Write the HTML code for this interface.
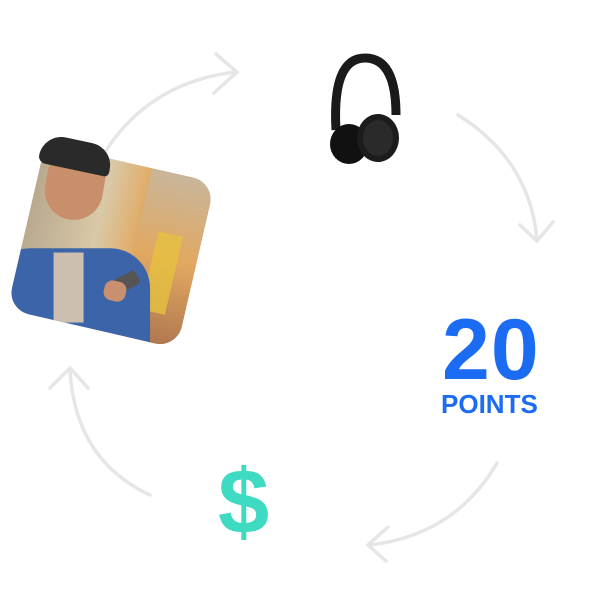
<!DOCTYPE html>
<html><head><meta charset="utf-8"><style>
html,body{margin:0;padding:0;background:#fff;width:600px;height:609px;overflow:hidden;position:relative;font-family:"Liberation Sans",sans-serif}
.card{position:absolute;left:24px;top:161px;width:174px;height:170px;transform:rotate(13deg);border-radius:22px;overflow:hidden;background:linear-gradient(90deg,#b9a98e 0%,#d9c9a8 40%,#e0b070 60%,#c98a50 80%,#7a5a40 100%)}
.t{position:absolute;font-weight:bold;color:#1b6cf2}
</style></head><body>
<svg width="600" height="609" style="position:absolute;left:0;top:0" fill="none" stroke="#e6e6e6" stroke-width="3.5" stroke-linecap="round">
<path d="M105 152 Q150 82 236 72"/><path d="M216 54 L237 72 L214 93"/>
<path d="M458 115 Q530 160 537 240"/><path d="M520 225 L537 241 L553 222"/>
<path d="M497 463 Q455 535 370 545"/><path d="M388 527 L368 545 L386 561"/>
<path d="M150 495 Q75 460 70 370"/><path d="M50 388 L70 368 L88 388"/>
</svg>
<div class="card">
 <div style="position:absolute;left:110px;top:0;width:70px;height:170px;background:linear-gradient(180deg,#c8b69a,#e2a860 50%,#b07850)"></div>
 <div style="position:absolute;left:130px;top:60px;width:25px;height:80px;background:#e6c040;opacity:.8"></div>
 <div style="position:absolute;left:-20px;top:95px;width:160px;height:110px;background:#3c64a8;border-radius:40px 40px 0 0;transform:rotate(-13deg)"></div>
 <div style="position:absolute;left:40px;top:100px;width:30px;height:70px;background:#cdbfb0;transform:rotate(-13deg)"></div>
 <div style="position:absolute;left:95px;top:110px;width:28px;height:15px;background:#555;transform:rotate(-40deg);border-radius:3px"></div>
 <div style="position:absolute;left:90px;top:118px;width:22px;height:20px;background:#c89070;border-radius:8px"></div>
</div>
<div style="position:absolute;left:46px;top:148px;width:58px;height:72px;background:#c98e6a;border-radius:28px 28px 30px 30px;transform:rotate(10deg)"></div>
<div style="position:absolute;left:40px;top:140px;width:72px;height:30px;background:#2a2a2a;border-radius:30px 30px 6px 10px;transform:rotate(12deg)"></div>
<svg width="90" height="120" style="position:absolute;left:320px;top:50px">
<path d="M16 80 Q12 8 45 8 Q76 8 76 65" fill="none" stroke="#1a1a1a" stroke-width="9"/>
<ellipse cx="29" cy="94" rx="19" ry="20" fill="#111"/>
<ellipse cx="58" cy="88" rx="21" ry="24" fill="#1c1c1c"/>
<ellipse cx="58" cy="88" rx="15" ry="18" fill="#2a2a2a"/>
</svg>
<div class="t" style="left:442px;top:300px;font-size:86px;letter-spacing:1px;line-height:100px">20</div>
<div class="t" style="left:441px;top:390px;font-size:26px;line-height:28px">POINTS</div>
<div style="position:absolute;left:218px;top:452px;font-size:92px;font-weight:bold;color:#3edac2;line-height:100px">$</div>
</body></html>
